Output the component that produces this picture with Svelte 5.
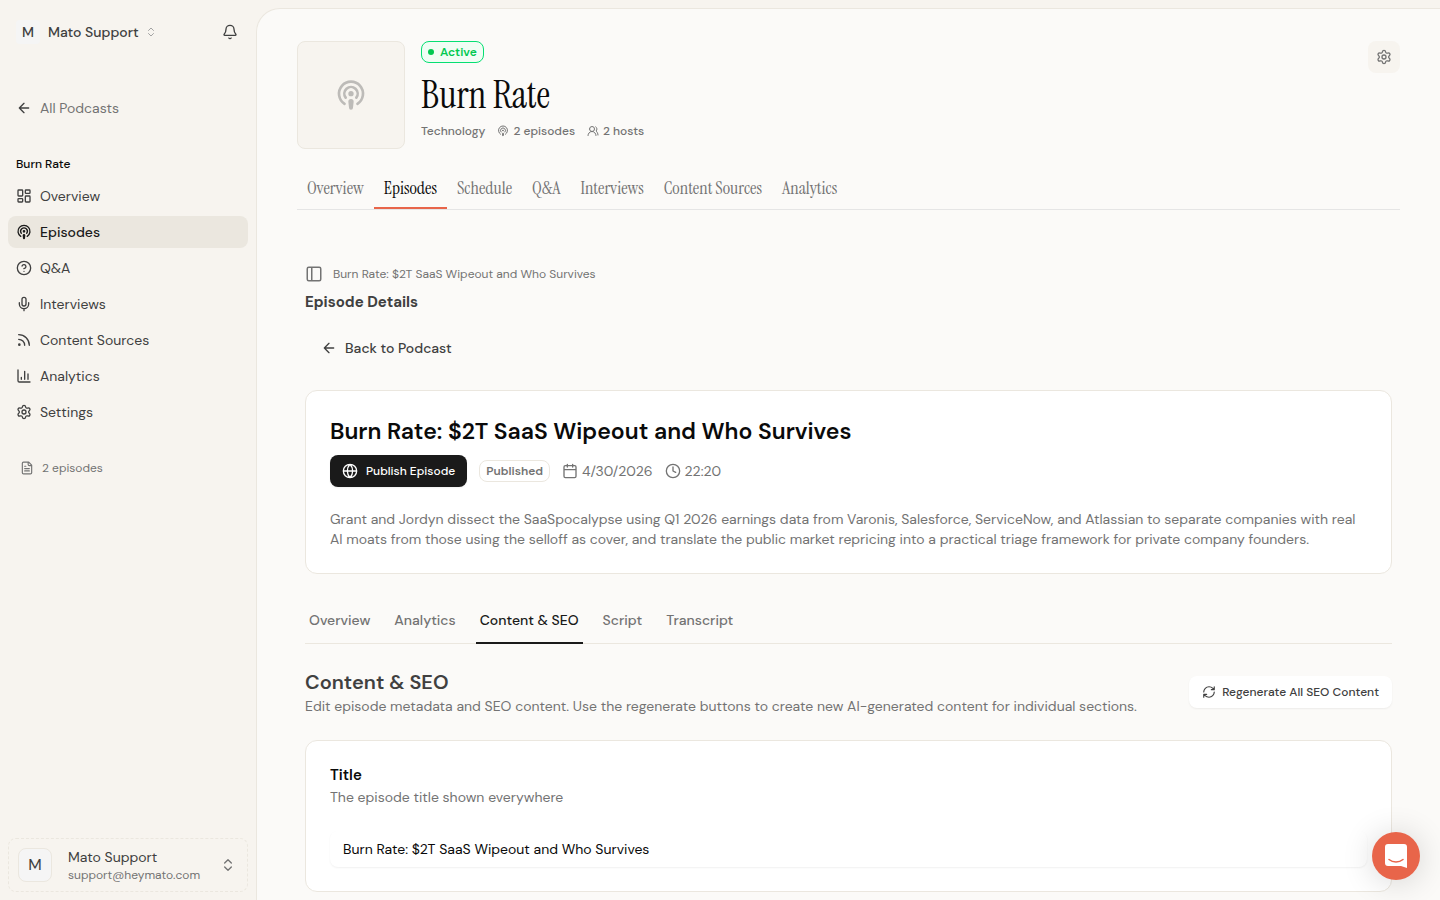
<script lang="ts">
  type IconName = keyof typeof icons;

  // 24x24 stroke icons, one path each.
  const icons = {
    chevrons: 'm7 15 5 5 5-5M7 9l5-5 5 5',
    bell: 'M10.27 21a2 2 0 0 0 3.46 0M3.26 15.33A1 1 0 0 0 4 17h16a1 1 0 0 0 .74-1.67C19.41 13.96 18 12.5 18 8A6 6 0 0 0 6 8c0 4.5-1.41 5.96-2.74 7.33',
    arrowLeft: 'm12 19-7-7 7-7M19 12H5',
    dashboard:
      'M4 3h5a1 1 0 0 1 1 1v7a1 1 0 0 1-1 1H4a1 1 0 0 1-1-1V4a1 1 0 0 1 1-1zM15 3h5a1 1 0 0 1 1 1v3a1 1 0 0 1-1 1h-5a1 1 0 0 1-1-1V4a1 1 0 0 1 1-1zM15 12h5a1 1 0 0 1 1 1v7a1 1 0 0 1-1 1h-5a1 1 0 0 1-1-1v-7a1 1 0 0 1 1-1zM4 16h5a1 1 0 0 1 1 1v3a1 1 0 0 1-1 1H4a1 1 0 0 1-1-1v-3a1 1 0 0 1 1-1z',
    podcast:
      'M16.85 18.58a9 9 0 1 0-9.7 0M8 14a5 5 0 1 1 8 0M11 11a1 1 0 1 0 2 0 1 1 0 1 0-2 0M13 17a1 1 0 1 0-2 0l.5 4.5a.5.5 0 1 0 1 0Z',
    help: 'M2 12a10 10 0 1 0 20 0 10 10 0 1 0-20 0M9.09 9a3 3 0 0 1 5.83 1c0 2-3 3-3 3M12 17h.01',
    mic: 'M12 2a3 3 0 0 0-3 3v7a3 3 0 0 0 6 0V5a3 3 0 0 0-3-3ZM19 10v2a7 7 0 0 1-14 0v-2M12 19v3',
    rss: 'M4 11a9 9 0 0 1 9 9M4 4a16 16 0 0 1 16 16M4 19a1 1 0 1 0 2 0 1 1 0 1 0-2 0',
    chart: 'M3 3v16a2 2 0 0 0 2 2h16M18 17V9M13 17V5M8 17v-3',
    settings:
      'M9.671 4.136a2.34 2.34 0 0 1 4.659 0 2.34 2.34 0 0 0 3.319 1.915 2.34 2.34 0 0 1 2.33 4.033 2.34 2.34 0 0 0 0 3.831 2.34 2.34 0 0 1-2.33 4.033 2.34 2.34 0 0 0-3.319 1.915 2.34 2.34 0 0 1-4.659 0 2.34 2.34 0 0 0-3.32-1.915 2.34 2.34 0 0 1-2.33-4.033 2.34 2.34 0 0 0 0-3.831A2.34 2.34 0 0 1 6.35 6.051a2.34 2.34 0 0 0 3.319-1.915M9 12a3 3 0 1 0 6 0 3 3 0 1 0-6 0',
    file: 'M15 2H6a2 2 0 0 0-2 2v16a2 2 0 0 0 2 2h12a2 2 0 0 0 2-2V7ZM14 2v4a2 2 0 0 0 2 2h4M10 9H8M16 13H8M16 17H8',
    users:
      'M18 21a8 8 0 0 0-16 0M5 8a5 5 0 1 0 10 0A5 5 0 1 0 5 8M22 20c0-3.37-2-6.5-4-8a5 5 0 0 0-.45-8.3',
    panel: 'M5 3h14a2 2 0 0 1 2 2v14a2 2 0 0 1-2 2H5a2 2 0 0 1-2-2V5a2 2 0 0 1 2-2zM9 3v18',
    globe: 'M2 12a10 10 0 1 0 20 0 10 10 0 1 0-20 0M12 2a14.5 14.5 0 0 0 0 20 14.5 14.5 0 0 0 0-20M2 12h20',
    calendar: 'M8 2v4M16 2v4M5 4h14a2 2 0 0 1 2 2v14a2 2 0 0 1-2 2H5a2 2 0 0 1-2-2V6a2 2 0 0 1 2-2zM3 10h18',
    clock: 'M2 12a10 10 0 1 0 20 0 10 10 0 1 0-20 0M12 6v6l4 2',
    refresh:
      'M3 12a9 9 0 0 1 9-9 9.75 9.75 0 0 1 6.74 2.74L21 8M21 3v5h-5M21 12a9 9 0 0 1-9 9 9.75 9.75 0 0 1-6.74-2.74L3 16M8 16H3v5',
  };

  const navItems: { label: string; icon: IconName }[] = [
    { label: 'Overview', icon: 'dashboard' },
    { label: 'Episodes', icon: 'podcast' },
    { label: 'Q&A', icon: 'help' },
    { label: 'Interviews', icon: 'mic' },
    { label: 'Content Sources', icon: 'rss' },
    { label: 'Analytics', icon: 'chart' },
    { label: 'Settings', icon: 'settings' },
  ];
  const podcastTabs = ['Overview', 'Episodes', 'Schedule', 'Q&A', 'Interviews', 'Content Sources', 'Analytics'];
  const episodeTabs = ['Overview', 'Analytics', 'Content & SEO', 'Script', 'Transcript'];

  let section = $state('Episodes');
  let episodeTab = $state('Content & SEO');
  let title = $state('Burn Rate: $2T SaaS Wipeout and Who Survives');
</script>

{#snippet icon(name: IconName, size = 16, stroke = 2)}
  <svg
    width={size}
    height={size}
    viewBox="0 0 24 24"
    fill="none"
    stroke="currentColor"
    stroke-width={stroke}
    stroke-linecap="round"
    stroke-linejoin="round"
    aria-hidden="true"
  >
    <path d={icons[name]} />
  </svg>
{/snippet}

<div class="shell">
  <aside class="sidebar">
    <div class="workspace">
      <button type="button" class="workspace__switch">
        <span class="workspace__avatar">M</span>
        <span class="workspace__name">Mato Support <span class="faint">{@render icon('chevrons', 12)}</span></span>
      </button>
      <button type="button" class="workspace__bell" aria-label="Notifications">{@render icon('bell')}</button>
    </div>

    <a class="nav-link nav-link--back" href="#podcasts">{@render icon('arrowLeft')}<span>All Podcasts</span></a>

    <h2 class="nav-heading">Burn Rate</h2>
    <nav class="nav" aria-label="Podcast">
      {#each navItems as item}
        <a
          class="nav-link"
          class:nav-link--active={item.label === section}
          href="#{item.label}"
          onclick={() => (section = item.label)}
        >
          {@render icon(item.icon)}
          {item.label}
        </a>
      {/each}
    </nav>

    <div class="nav-stat">{@render icon('file', 14)} 2 episodes</div>

    <button type="button" class="account">
      <span class="account__avatar">M</span>
      <span class="account__text">
        <span class="account__name">Mato Support</span>
        <span class="account__email">support@heymato.com</span>
      </span>
      <span class="account__chevrons">{@render icon('chevrons')}</span>
    </button>
  </aside>

  <main class="main">
    <header class="podcast">
      <div class="podcast__cover">{@render icon('podcast', 32)}</div>
      <div class="podcast__info">
        <span class="badge badge--active"><span class="badge__dot"></span>Active</span>
        <h1>Burn Rate</h1>
        <div class="podcast__meta">
          <span>Technology</span>
          <span class="meta-item">{@render icon('podcast', 12)} 2 episodes</span>
          <span class="meta-item">{@render icon('users', 12)} 2 hosts</span>
        </div>
      </div>
      <button type="button" class="podcast__settings" aria-label="Podcast settings">
        {@render icon('settings')}
      </button>
    </header>

    <div class="podcast-tabs" role="tablist">
      {#each podcastTabs as tab}
        <button
          type="button"
          role="tab"
          class="podcast-tab"
          class:podcast-tab--active={tab === section}
          aria-selected={tab === section}
          onclick={() => (section = tab)}>{tab}</button
        >
      {/each}
    </div>

    <div class="content">
      <div class="crumb">
        <button type="button" class="crumb__toggle" aria-label="Toggle sidebar">{@render icon('panel', 18)}</button>
        <span>Burn Rate: $2T SaaS Wipeout and Who Survives</span>
      </div>
      <h2 class="content__title">Episode Details</h2>
      <a class="back" href="#episodes">{@render icon('arrowLeft')} Back to Podcast</a>

      <section class="card">
        <h2 class="episode__title">Burn Rate: $2T SaaS Wipeout and Who Survives</h2>
        <div class="episode__meta">
          <button type="button" class="btn btn--dark">{@render icon('globe')} Publish Episode</button>
          <span class="badge">Published</span>
          <span class="meta-item">{@render icon('calendar')} 4/30/2026</span>
          <span class="meta-item">{@render icon('clock')} 22:20</span>
        </div>
        <p class="episode__summary">
          Grant and Jordyn dissect the SaaSpocalypse using Q1 2026 earnings data from Varonis, Salesforce, ServiceNow,
          and Atlassian to separate companies with real AI moats from those using the selloff as cover, and translate
          the public market repricing into a practical triage framework for private company founders.
        </p>
      </section>

      <div class="episode-tabs" role="tablist">
        {#each episodeTabs as tab}
          <button
            type="button"
            role="tab"
            class="episode-tab"
            class:episode-tab--active={tab === episodeTab}
            aria-selected={tab === episodeTab}
            onclick={() => (episodeTab = tab)}>{tab}</button
          >
        {/each}
      </div>

      <div class="section-head">
        <div>
          <h3>Content & SEO</h3>
          <p>
            Edit episode metadata and SEO content. Use the regenerate buttons to create new AI-generated content for
            individual sections.
          </p>
        </div>
        <button type="button" class="btn">{@render icon('refresh', 14)} Regenerate All SEO Content</button>
      </div>

      <section class="card">
        <label class="field__label" for="episode-title">Title</label>
        <p class="field__hint">The episode title shown everywhere</p>
        <input id="episode-title" class="field__input" type="text" bind:value={title} />
      </section>
    </div>
  </main>

  <button type="button" class="chat" aria-label="Open chat">
    <svg width="22" height="24" viewBox="0 0 22 24" aria-hidden="true">
      <path d="M3 0h16a3 3 0 0 1 3 3v21l-6-2H3a3 3 0 0 1-3-3V3a3 3 0 0 1 3-3z" fill="#fff" />
      <path d="M4 15.500c4 3.300 10 3.300 14 0" fill="none" stroke="#e8654a" stroke-width="1.500" stroke-linecap="round" />
    </svg>
  </button>
</div>

<style>
  :global(body) {
    background: #f7f4ef;
  }
  .shell {
    --ink: #1a1a1a;
    --text: #404040;
    --muted: #737373;
    --line: #ebe7df;
    --sand: #f7f4ef;
    --accent: #e8654a;
    display: grid;
    grid-template-columns: 256px minmax(0, 1fr);
    height: 100vh;
    overflow: hidden;
    color: var(--text);
    font-family: 'DM Sans', Inter, sans-serif;
    font-size: 14px;
    line-height: 20px;
  }
  h1,
  h2,
  h3,
  p {
    margin: 0;
  }
  button,
  input {
    font: inherit;
    color: inherit;
  }
  button {
    display: inline-flex;
    align-items: center;
    padding: 0;
    border: none;
    background: none;
    cursor: pointer;
  }
  a {
    color: inherit;
    text-decoration: none;
  }
  svg {
    display: block;
    flex: none;
  }

  .sidebar {
    display: flex;
    flex-direction: column;
    padding: 16px 8px 8px;
  }
  .workspace {
    display: flex;
    align-items: center;
    justify-content: space-between;
    height: 32px;
    margin-bottom: 44px;
    padding: 0 10px 0 8px;
  }
  .workspace__switch {
    gap: 8px;
    font-weight: 500;
  }
  .workspace__name {
    display: inline-flex;
    align-items: center;
    gap: 6px;
  }
  .workspace__avatar,
  .account__avatar {
    display: grid;
    place-items: center;
    width: 24px;
    height: 24px;
    border-radius: 4px;
    background: #f5f5f5;
  }
  .faint {
    color: #a3a3a3;
  }
  .nav-link {
    display: flex;
    align-items: center;
    gap: 8px;
    height: 32px;
    padding: 0 8px;
    border-radius: 8px;
  }
  .nav-link--back span {
    color: var(--muted);
  }
  .nav-link--active {
    background: var(--line);
    color: var(--ink);
    font-weight: 500;
  }
  .nav-heading {
    margin: 32px 0 8px;
    padding: 0 8px;
    color: #0a0a0a;
    font-size: 12px;
    font-weight: 500;
    line-height: 16px;
  }
  .nav {
    display: flex;
    flex-direction: column;
    gap: 4px;
  }
  .nav-stat {
    display: flex;
    align-items: center;
    gap: 8px;
    margin: 32px 12px 0;
    color: var(--muted);
    font-size: 12px;
    line-height: 16px;
  }
  .account {
    gap: 16px;
    margin-top: auto;
    padding: 8px 11px 8px 9px;
    border: 1px dashed var(--line);
    border-radius: 8px;
    text-align: left;
  }
  .account__avatar {
    width: 32px;
    height: 32px;
    border: 1px solid var(--line);
    border-radius: 8px;
    font-size: 16px;
  }
  .account__text {
    display: flex;
    flex: 1;
    flex-direction: column;
  }
  .account__email {
    color: var(--muted);
    font-size: 12px;
    line-height: 16px;
  }
  .account__chevrons {
    color: var(--muted);
  }

  .main {
    margin-top: 8px;
    padding: 32px 40px 8px;
    border-top: 1px solid var(--line);
    border-left: 1px solid var(--line);
    border-top-left-radius: 24px;
    background: #fbfaf8;
    overflow-y: auto;
    scrollbar-width: none;
  }
  .podcast {
    display: flex;
    align-items: flex-start;
    gap: 16px;
  }
  .podcast__cover {
    display: grid;
    place-items: center;
    width: 106px;
    height: 106px;
    border: 1px solid var(--line);
    border-radius: 8px;
    background: var(--sand);
    color: #bdbbb8;
  }
  .podcast__info {
    flex: 1;
  }
  h1 {
    margin: 12px 0 8px;
    color: #0a0a0a;
    font-family: 'Instrument Serif', 'Liberation Serif', serif;
    font-size: 38px;
    font-weight: 400;
    line-height: 40px;
  }
  .podcast__meta,
  .episode__meta {
    display: flex;
    align-items: center;
    gap: 12px;
    color: var(--muted);
  }
  .podcast__meta {
    font-size: 12px;
    font-weight: 500;
    line-height: 16px;
  }
  .meta-item {
    display: inline-flex;
    align-items: center;
    gap: 4px;
  }
  .podcast__settings {
    justify-content: center;
    width: 32px;
    height: 32px;
    border-radius: 8px;
    background: var(--sand);
    color: var(--muted);
  }
  .badge {
    display: inline-flex;
    align-items: center;
    gap: 6px;
    width: fit-content;
    padding: 2px 6px;
    border: 1px solid var(--line);
    border-radius: 8px;
    color: var(--muted);
    font-size: 12px;
    font-weight: 600;
    line-height: 16px;
  }
  .badge--active {
    display: flex;
    border-color: #05df72;
    background: #f0fdf4;
    color: #00c950;
  }
  .badge__dot {
    width: 6px;
    height: 6px;
    border-radius: 50%;
    background: currentColor;
  }

  .podcast-tabs,
  .episode-tabs {
    display: flex;
    border-bottom: 1px solid #e5e5e5;
  }
  .podcast-tabs {
    margin-top: 20px;
  }
  .podcast-tab {
    height: 40px;
    padding: 0 10px;
    border-bottom: 2px solid transparent;
    color: var(--muted);
    font-family: 'Instrument Serif', 'Liberation Serif', serif;
    font-size: 18px;
  }
  .podcast-tab--active {
    border-color: var(--accent);
    color: #0a0a0a;
  }

  .content {
    padding: 54px 8px 0;
  }
  .crumb {
    display: flex;
    align-items: center;
    gap: 10px;
    color: var(--muted);
    font-size: 12px;
  }
  .content__title {
    margin-top: 8px;
    font-size: 15px;
    font-weight: 700;
    line-height: 20px;
  }
  .back {
    display: inline-flex;
    align-items: center;
    gap: 8px;
    margin: 20px 0 26px;
    padding: 6px 16px;
    font-weight: 500;
  }
  .card {
    padding: 24px;
    border: 1px solid var(--line);
    border-radius: 12px;
    background: #fff;
  }
  .episode__title {
    color: #0a0a0a;
    font-size: 23px;
    font-weight: 600;
    line-height: 32px;
  }
  .episode__meta {
    margin: 8px 0 22px;
  }
  .btn {
    gap: 6px;
    flex: none;
    height: 32px;
    padding: 0 13px;
    border-radius: 8px;
    background: #fff;
    box-shadow: 0 1px 2px rgb(0 0 0 / 6%);
    font-size: 12px;
    font-weight: 500;
  }
  .btn--dark {
    gap: 8px;
    padding: 0 12px;
    background: var(--ink);
    color: #fff;
  }
  .episode__summary {
    color: var(--muted);
  }
  .episode-tabs {
    gap: 16px;
    margin-top: 24px;
    border-color: var(--line);
  }
  .episode-tab {
    height: 46px;
    margin-bottom: -1px;
    padding: 0 4px;
    border-bottom: 2px solid transparent;
    color: var(--muted);
    font-weight: 500;
  }
  .episode-tab--active {
    border-color: var(--ink);
    color: var(--ink);
  }
  .section-head {
    display: flex;
    align-items: center;
    justify-content: space-between;
    gap: 16px;
    margin: 24px 0;
    color: var(--muted);
  }
  .section-head h3 {
    color: var(--text);
    font-size: 20px;
    font-weight: 600;
    line-height: 28px;
  }
  .section-head .btn {
    color: var(--text);
  }
  .field__label {
    display: block;
    color: #0a0a0a;
    font-size: 15px;
    font-weight: 600;
    line-height: 20px;
  }
  .field__hint {
    margin: 2px 0 24px;
    color: var(--muted);
  }
  .field__input {
    box-sizing: border-box;
    width: 100%;
    height: 36px;
    padding: 0 13px;
    border: none;
    border-radius: 8px;
    background: #fff;
    box-shadow: 0 1px 2px rgb(0 0 0 / 6%);
    color: #0a0a0a;
  }

  /* Floats over the page content. */
  .chat {
    position: fixed;
    right: 20px;
    bottom: 20px;
    justify-content: center;
    width: 48px;
    height: 48px;
    border-radius: 50%;
    background: var(--accent);
    box-shadow: 0 2px 32px rgb(0 0 0 / 16%);
  }
</style>
